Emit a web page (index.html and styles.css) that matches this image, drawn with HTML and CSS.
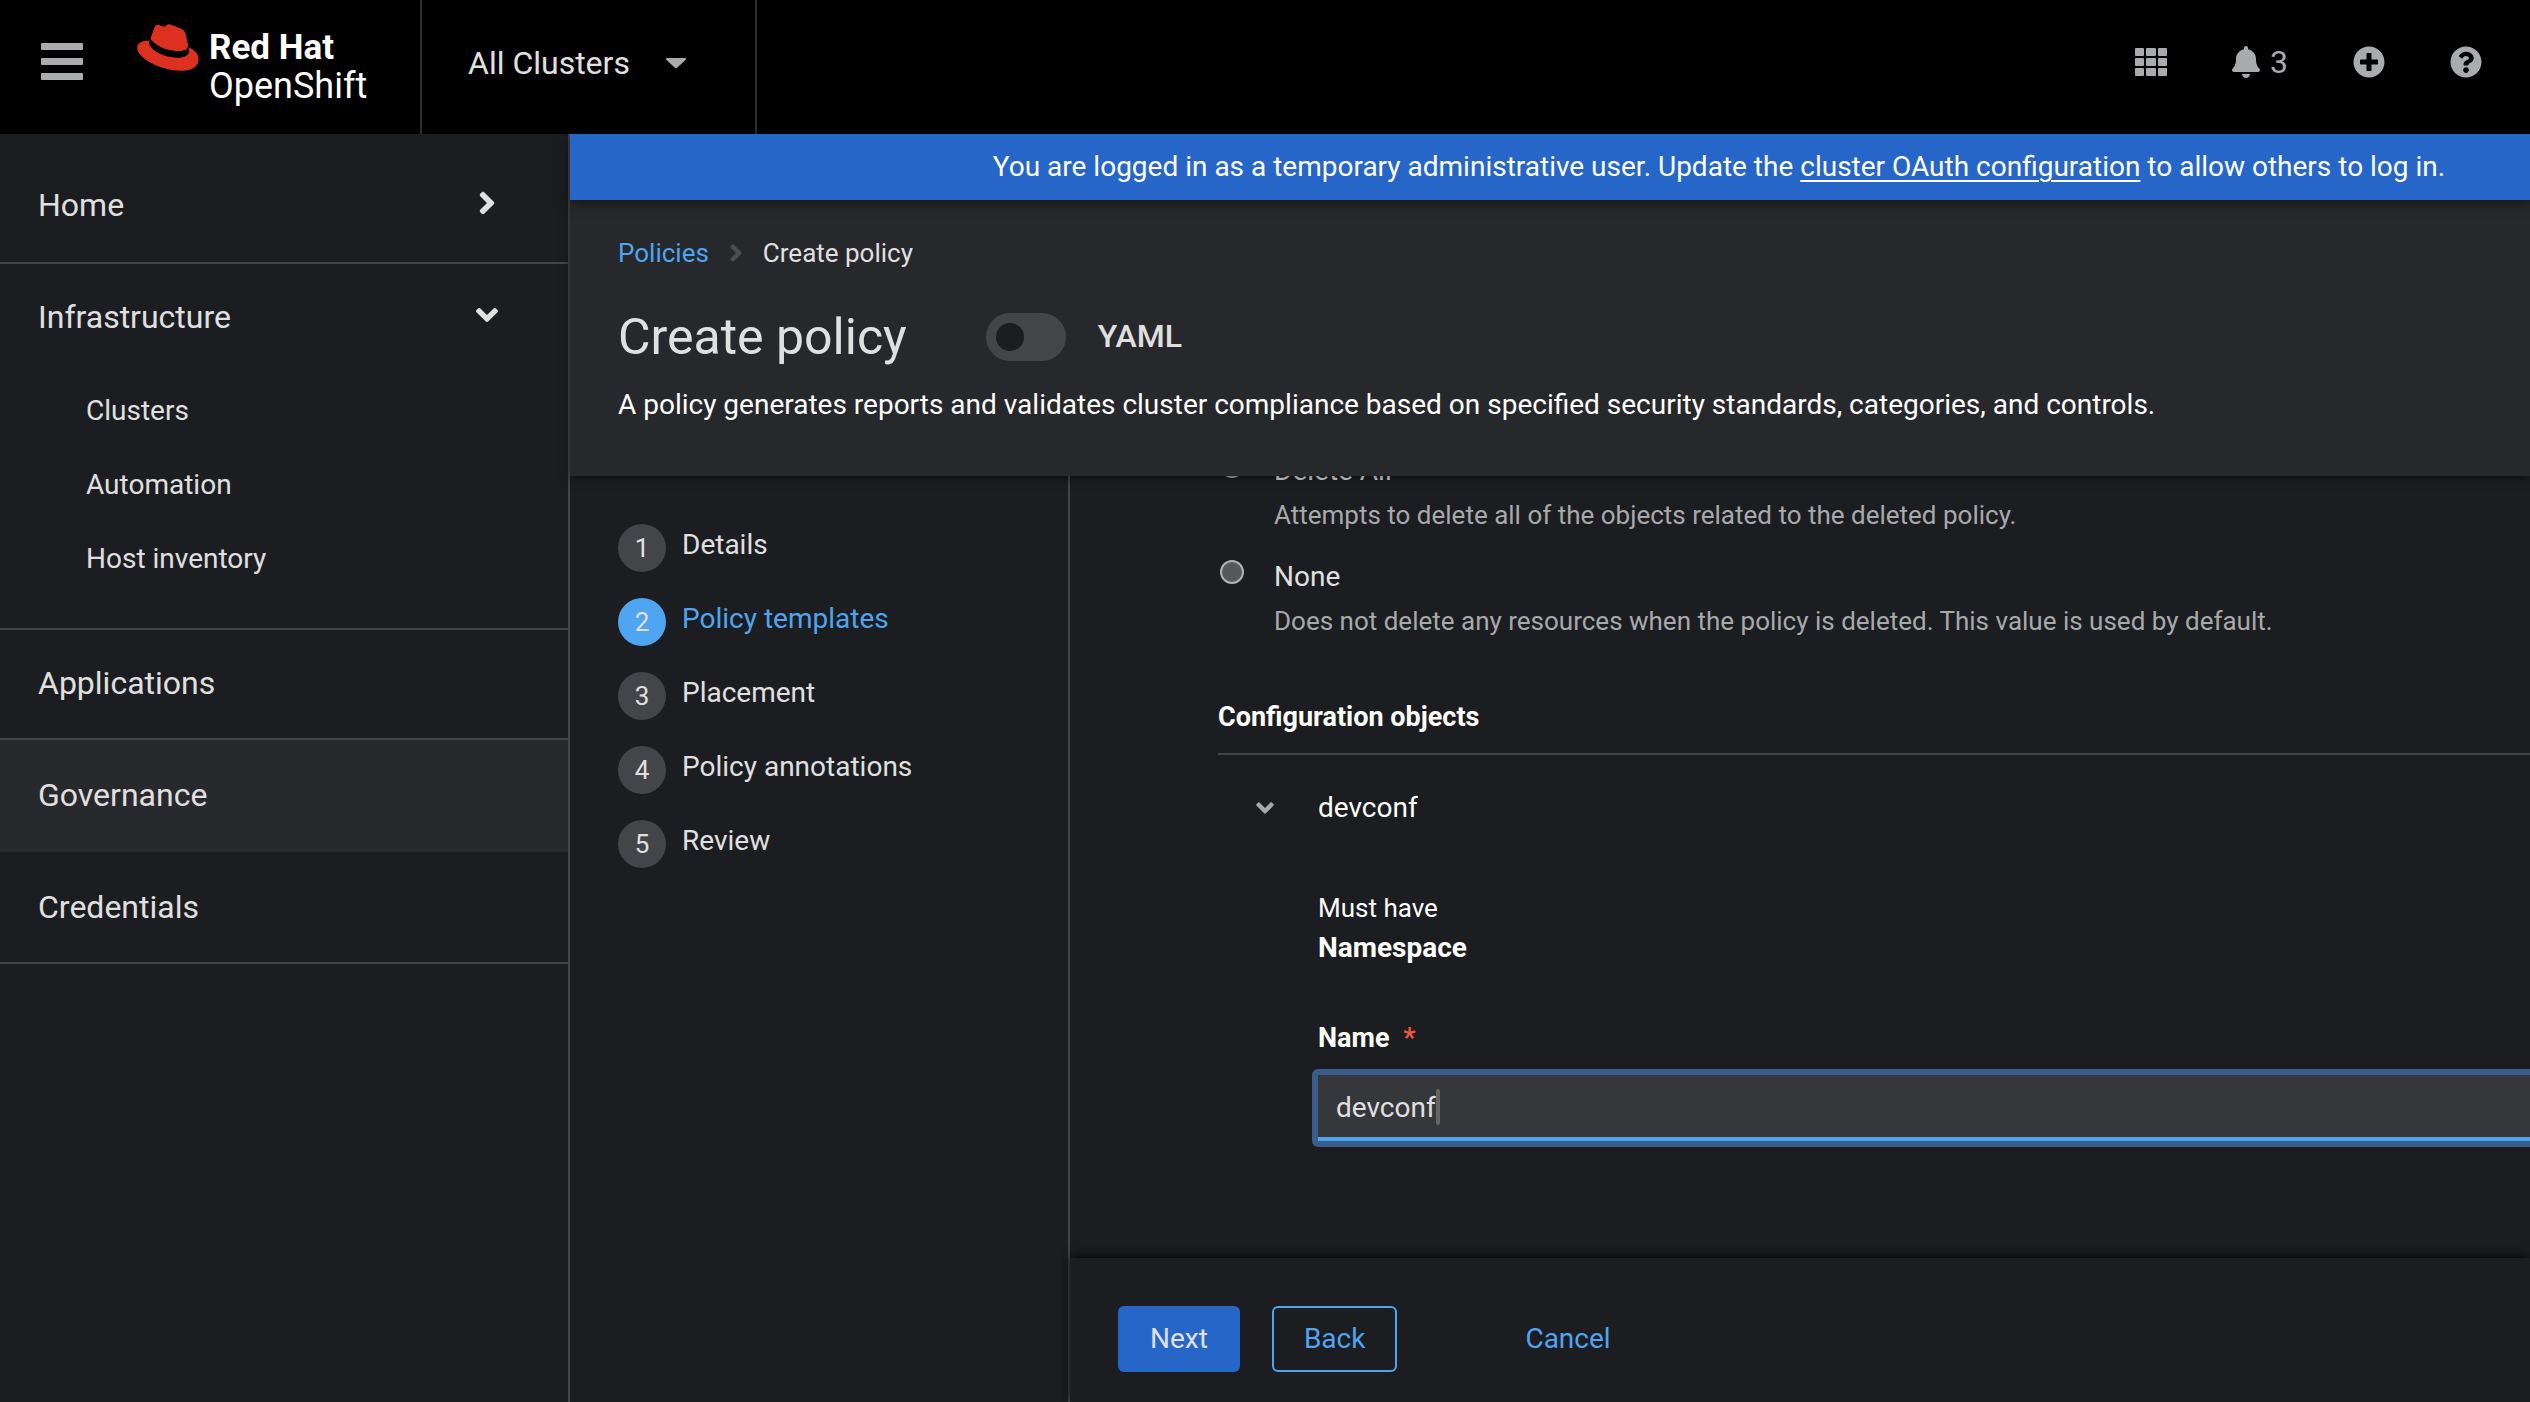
FILE: index.html
```html
<!DOCTYPE html>
<html lang="en">
<head>
<meta charset="utf-8">
<title>Create policy</title>
<link rel="stylesheet" href="styles.css">
</head>
<body>
<svg class="sprite" aria-hidden="true">
  <symbol id="angle-right" viewBox="0 0 256 512"><path d="M224.3 273l-136 136c-9.4 9.4-24.6 9.4-33.9 0l-22.6-22.6c-9.4-9.4-9.4-24.6 0-33.9l96.4-96.4-96.4-96.4c-9.4-9.4-9.4-24.6 0-33.9L54.3 103c9.4-9.4 24.6-9.4 33.9 0l136 136c9.5 9.4 9.5 24.6.1 34z"/></symbol>
  <symbol id="angle-down" viewBox="0 0 320 512"><path d="M143 352.3L7 216.3c-9.4-9.4-9.4-24.6 0-33.9l22.6-22.6c9.4-9.4 24.6-9.4 33.9 0l96.4 96.4 96.4-96.4c9.4-9.4 24.6-9.4 33.9 0l22.6 22.6c9.4 9.4 9.4 24.6 0 33.9l-136 136c-9.2 9.4-24.4 9.4-33.8 0z"/></symbol>
</svg>

<header class="masthead">
  <div class="brand">
    <button class="icon-button" type="button" aria-label="Global navigation">
      <svg width="42" height="37" viewBox="0 0 42 37"><rect width="42" height="7" rx="1"/><rect y="15" width="42" height="7" rx="1"/><rect y="30" width="42" height="7" rx="1"/></svg>
    </button>
    <a class="logo" href="#">
      <svg class="hat" width="62" height="47" viewBox="0 0 192 145"><path d="M127.47,83.49c12.51,0,30.61-2.58,30.61-17.46a14,14,0,0,0-.31-3.42l-7.45-32.36c-1.72-7.12-3.23-10.35-15.73-16.6C124.89,8.69,103.76.5,97.51.5,91.69.5,90,8,83.06,8c-6.68,0-11.64-5.6-17.89-5.6-6,0-9.91,4.09-12.93,12.5,0,0-8.41,23.72-9.49,27.16A6.43,6.43,0,0,0,42.53,44c0,9.22,36.3,39.45,84.94,39.45M160,72.07c1.73,8.19,1.73,9.05,1.73,10.13,0,14-15.74,21.77-36.43,21.77C78.54,104,37.58,76.6,37.58,58.49a18.45,18.45,0,0,1,1.51-7.33C22.27,52,.5,55,.5,74.22c0,31.48,74.59,70.28,133.65,70.28,45.28,0,56.7-20.48,56.7-36.65,0-12.72-11-27.16-30.83-35.78"/></svg>
      <span class="wordmark"><strong>Red Hat</strong><span>OpenShift</span></span>
    </a>
  </div>
  <button class="cluster-switcher" type="button">All Clusters
    <svg width="20" height="10" viewBox="0 0 20 10"><path d="M1 0h18a1 1 0 0 1 .7 1.700l-8.300 7.700a2 2 0 0 1-2.800 0L.3 1.700A1 1 0 0 1 1 0z"/></svg>
  </button>
  <div class="tools">
    <button class="icon-button" type="button" aria-label="Applications">
      <svg width="32" height="28" viewBox="0 0 32 28"><g><rect width="9" height="8" rx="1"/><rect x="11" width="10" height="8" rx="1"/><rect x="23" width="9" height="8" rx="1"/><rect y="10" width="9" height="8" rx="1"/><rect x="11" y="10" width="10" height="8" rx="1"/><rect x="23" y="10" width="9" height="8" rx="1"/><rect y="20" width="9" height="8" rx="1"/><rect x="11" y="20" width="10" height="8" rx="1"/><rect x="23" y="20" width="9" height="8" rx="1"/></g></svg>
    </button>
    <button class="icon-button notifications" type="button" aria-label="3 notifications">
      <svg width="28" height="32" viewBox="0 0 448 512"><path d="M224 512c35.320 0 63.970-28.650 63.970-64H160.030c0 35.350 28.650 64 63.970 64zm215.390-149.710c-19.320-20.760-55.470-51.990-55.470-154.290 0-77.700-54.480-139.900-127.940-155.160V32c0-17.670-14.320-32-31.980-32s-31.980 14.330-31.980 32v20.840C118.560 68.100 64.080 130.300 64.080 208c0 102.300-36.150 133.530-55.470 154.290-6 6.450-8.660 14.160-8.610 21.710.11 16.400 12.980 32 32.100 32h383.800c19.120 0 32-15.600 32.100-32 .05-7.550-2.610-15.270-8.610-21.710z"/></svg>
      <span>3</span>
    </button>
    <button class="icon-button" type="button" aria-label="Import">
      <svg width="32" height="32" viewBox="0 0 512 512"><path d="M256 8C119 8 8 119 8 256s111 248 248 248 248-111 248-248S393 8 256 8zm144 276c0 6.600-5.400 12-12 12h-92v92c0 6.600-5.400 12-12 12h-56c-6.600 0-12-5.400-12-12v-92h-92c-6.600 0-12-5.400-12-12v-56c0-6.600 5.400-12 12-12h92v-92c0-6.600 5.400-12 12-12h56c6.600 0 12 5.400 12 12v92h92c6.600 0 12 5.400 12 12v56z"/></svg>
    </button>
    <button class="icon-button" type="button" aria-label="Help">
      <svg width="32" height="32" viewBox="0 0 512 512"><path d="M504 256c0 136.997-111.043 248-248 248S8 392.997 8 256C8 119.083 119.043 8 256 8s248 111.083 248 248zM262.655 90c-54.497 0-89.255 22.957-116.549 63.758-3.536 5.286-2.353 12.415 2.715 16.258l34.699 26.310c5.205 3.947 12.621 3.008 16.665-2.122 17.864-22.658 30.113-35.797 57.303-35.797 20.429 0 45.698 13.148 45.698 32.958 0 14.976-12.363 22.667-32.534 33.976C247.128 238.528 216 254.941 216 296v4c0 6.627 5.373 12 12 12h56c6.627 0 12-5.373 12-12v-1.333c0-28.462 83.186-29.647 83.186-106.667 0-58.002-60.165-102-116.531-102zM256 338c-25.365 0-46 20.635-46 46 0 25.364 20.635 46 46 46s46-20.636 46-46c0-25.365-20.635-46-46-46z"/></svg>
    </button>
  </div>
</header>

<div class="shell">
  <nav class="sidebar" aria-label="Main">
    <ul class="nav-list">
      <li class="nav-item"><a class="nav-link" href="#">Home<svg class="nav-arrow" width="22" height="36"><use href="#angle-right"/></svg></a></li>
      <li class="nav-item ruled">
        <a class="nav-link" href="#">Infrastructure<svg class="nav-arrow" width="22" height="36"><use href="#angle-down"/></svg></a>
        <ul class="subnav">
          <li><a href="#">Clusters</a></li>
          <li><a href="#">Automation</a></li>
          <li><a href="#">Host inventory</a></li>
        </ul>
      </li>
      <li class="nav-item ruled"><a class="nav-link" href="#">Applications</a></li>
      <li class="nav-item ruled current"><a class="nav-link" href="#" aria-current="page">Governance</a></li>
      <li class="nav-item plain"><a class="nav-link" href="#">Credentials</a></li>
    </ul>
  </nav>

  <main class="page">
    <p class="banner">You are logged in as a temporary administrative user. Update the <a href="#">cluster OAuth configuration</a> to allow others to log in.</p>

    <section class="page-header">
      <nav class="breadcrumb" aria-label="Breadcrumb">
        <a href="#">Policies</a>
        <svg width="14" height="28"><use href="#angle-right"/></svg>
        <span>Create policy</span>
      </nav>
      <div class="title-row">
        <h1>Create policy</h1>
        <label class="switch"><input type="checkbox" role="switch"><span>YAML</span></label>
      </div>
      <p class="description">A policy generates reports and validates cluster compliance based on specified security standards, categories, and controls.</p>
    </section>

    <div class="wizard">
      <nav class="wizard-nav" aria-label="Steps">
        <ol>
          <li><a href="#"><span class="step">1</span>Details</a></li>
          <li><a class="active" href="#" aria-current="step"><span class="step">2</span>Policy templates</a></li>
          <li><a href="#"><span class="step">3</span>Placement</a></li>
          <li><a href="#"><span class="step">4</span>Policy annotations</a></li>
          <li><a href="#"><span class="step">5</span>Review</a></li>
        </ol>
      </nav>

      <form class="wizard-main">
        <div class="wizard-body">
          <div class="scrolled">
            <div class="radio">
              <input type="radio" name="prune" id="prune-all">
              <div><label for="prune-all">Delete All</label><p>Attempts to delete all of the objects related to the deleted policy.</p></div>
            </div>
            <div class="radio">
              <input type="radio" name="prune" id="prune-none">
              <div><label for="prune-none">None</label><p>Does not delete any resources when the policy is deleted. This value is used by default.</p></div>
            </div>
            <h2>Configuration objects</h2>
            <div class="object">
              <button class="expander" type="button" aria-label="Collapse devconf" aria-expanded="true"><svg width="18" height="28"><use href="#angle-down"/></svg></button>
              <div class="object-fields">
                <p class="object-name">devconf</p>
                <p class="must">Must have</p>
                <p class="kind">Namespace</p>
                <label class="field-label" for="ns-name">Name <span class="required">*</span></label>
                <div class="field">
                  <input type="text" id="ns-name" value="devconf">
                  <span class="caret"></span>
                </div>
              </div>
            </div>
          </div>
        </div>
        <footer class="wizard-footer">
          <button class="btn primary" type="button">Next</button>
          <button class="btn secondary" type="button">Back</button>
          <button class="btn link" type="button">Cancel</button>
        </footer>
      </form>
    </div>
  </main>
</div>
</body>
</html>
```
FILE: styles.css
```css
:root {
  --bg: #1c1d20;
  --bg-raised: #27282b;
  --line: #444548;
  --text: #e0e0e0;
  --muted: #a8a9ab;
  --link: #4fa5f0;
  --blue: #2666c8;
}

* { box-sizing: border-box; }

body {
  margin: 0;
  height: 100vh;
  display: flex;
  flex-direction: column;
  overflow: hidden;
  background: var(--bg);
  color: var(--text);
  font: 28px/42px Roboto, "Liberation Sans", sans-serif;
}

p, h1, h2, ul, ol { margin: 0; padding: 0; }
ul, ol { list-style: none; }
a { color: inherit; text-decoration: none; }
button, input { font: inherit; color: inherit; margin: 0; }
svg { display: block; fill: currentColor; flex: none; }
.sprite { position: absolute; width: 0; height: 0; }

/* Masthead */
.masthead {
  display: flex;
  flex: none;
  min-height: 134px;
  background: #000;
}
.brand {
  display: flex;
  align-items: flex-start;
  gap: 54px;
  width: 422px;
  padding: 24px 0 0 41px;
  border-right: 2px solid #2b2c2e;
}
.icon-button {
  display: flex;
  align-items: center;
  padding: 0;
  border: 0;
  background: none;
  color: #aaabac;
}
.brand .icon-button { padding-top: 19px; }
.logo { display: flex; gap: 10px; color: #fff; }
.hat { fill: #dc3020; }
.wordmark {
  display: flex;
  flex-direction: column;
  padding-top: 5px;
  font-size: 36px;
  line-height: 38px;
}
.wordmark strong { font-size: 35px; }
.cluster-switcher {
  display: flex;
  align-items: center;
  gap: 36px;
  padding: 0 69px 8px 46px;
  border: 0;
  border-right: 2px solid #2b2c2e;
  background: none;
  font-size: 32px;
}
.cluster-switcher svg { color: #aaabac; }
.tools {
  display: flex;
  align-items: center;
  margin-left: auto;
  padding: 0 48px 10px 0;
  gap: 65px;
}
.notifications { gap: 10px; font-size: 32px; }

/* Layout */
.shell { display: flex; flex: 1; min-height: 0; }
.page { display: flex; flex-direction: column; flex: 1; min-width: 0; }

/* Sidebar */
.sidebar {
  flex: none;
  width: 570px;
  border-right: 2px solid var(--line);
  padding-top: 18px;
}
.nav-list { border-bottom: 2px solid var(--line); font-size: 32px; }
.nav-link {
  display: flex;
  align-items: center;
  justify-content: space-between;
  height: 110px;
  padding: 0 70px 4px 38px;
}
.nav-arrow { margin-bottom: 4px; }
.ruled { border-top: 2px solid var(--line); }
.plain .nav-link { padding-bottom: 0; }
.current {
  margin-top: -2px;
  padding-top: 2px;
  background: #28292c;
}
.subnav { padding: 0 0 32px 86px; font-size: 28px; }
.subnav a { display: block; line-height: 74px; }

/* Banner and page header */
.banner {
  position: relative;
  z-index: 2;
  padding: 12px 0 12px 338px;
  text-align: center;
  white-space: nowrap;
  background: var(--blue);
  color: #fff;
  box-shadow: 0 2px 12px rgba(0, 0, 0, .6);
}
.banner a {
  text-decoration: underline;
  text-decoration-thickness: 2px;
  text-underline-offset: 4px;
}
.page-header {
  position: relative;
  z-index: 1;
  padding: 34px 48px 50px;
  background: var(--bg-raised);
  box-shadow: 0 2px 10px rgba(0, 0, 0, .5);
}
.breadcrumb {
  display: flex;
  align-items: center;
  gap: 20px;
  font-size: 26px;
  line-height: 38px;
}
.breadcrumb a { color: var(--link); }
.breadcrumb svg { color: #4c4d50; }
.title-row {
  display: flex;
  align-items: center;
  gap: 79px;
  padding: 35px 0 17px;
}
h1 { font-size: 50px; font-weight: 400; line-height: 60px; }
.switch {
  display: flex;
  align-items: center;
  gap: 32px;
  font-size: 32px;
  font-weight: 500;
}
.switch span { padding-bottom: 2px; }
.switch input {
  appearance: none;
  display: flex;
  align-items: center;
  width: 80px;
  height: 48px;
  padding: 0 10px;
  border-radius: 24px;
  background: var(--line);
}
.switch input::before {
  content: "";
  width: 28px;
  height: 28px;
  border-radius: 50%;
  background: var(--bg);
}
.description { color: #fff; }

/* Wizard */
.wizard { display: flex; flex: 1; min-height: 0; }
.wizard-nav {
  flex: none;
  width: 500px;
  padding: 48px 48px 0;
  border-right: 2px solid var(--line);
}
.wizard-nav ol { display: flex; flex-direction: column; gap: 26px; }
.wizard-nav a {
  display: flex;
  align-items: flex-start;
  gap: 16px;
  height: 48px;
}
.wizard-nav .active { color: var(--link); }
.step {
  width: 48px;
  border-radius: 50%;
  background: var(--line);
  color: var(--text);
  font-size: 26px;
  line-height: 48px;
  text-align: center;
}
.active .step { background: var(--link); }
.wizard-main { display: flex; flex-direction: column; flex: 1; min-width: 0; }
.wizard-body { flex: 1; min-height: 0; overflow: hidden; }
.scrolled { margin-top: -26px; padding-left: 148px; }
.radio { display: flex; gap: 30px; margin-bottom: 21px; padding-left: 2px; }
.radio input {
  appearance: none;
  flex: none;
  width: 24px;
  height: 24px;
  margin-top: 4px;
  border: 2px solid #b0b1b3;
  border-radius: 50%;
  background: #57585b;
}
.radio label { display: block; }
.radio p {
  margin-top: 4px;
  color: var(--muted);
  font-size: 26px;
  line-height: 39px;
}
h2 {
  margin-top: 56px;
  padding-bottom: 16px;
  border-bottom: 2px solid var(--line);
  color: #fff;
  font-size: 27px;
  font-weight: 700;
  line-height: 40px;
}
.object {
  display: flex;
  align-items: flex-start;
  gap: 44px;
  padding: 32px 0 0 38px;
  color: #fff;
}
.expander {
  padding: 7px 0;
  border: 0;
  background: none;
  color: var(--muted);
}
.object-fields { flex: 1; min-width: 0; }
.must { margin-top: 60px; font-size: 26px; line-height: 38px; }
.kind { font-weight: 700; }
.field-label {
  display: block;
  margin-top: 49px;
  font-size: 27px;
  font-weight: 700;
  line-height: 40px;
}
.required { margin-left: 7px; color: #f0563d; }
.field {
  position: relative;
  margin: 11px -8px 0 -6px;
  padding: 6px;
  border-radius: 6px;
  background: #3b5d8c;
}
.field input {
  display: block;
  width: 100%;
  height: 66px;
  padding: 2px 18px 0;
  border: 0;
  border-bottom: 4px solid var(--link);
  border-radius: 0;
  outline: 0;
  background: #36373a;
  color: var(--text);
}
.caret {
  position: absolute;
  left: 124px;
  top: 20px;
  width: 4px;
  height: 36px;
  border-radius: 2px;
  background: #646567;
}
.wizard-footer {
  position: relative;
  display: flex;
  align-items: center;
  flex: none;
  gap: 32px;
  padding: 48px 48px 30px;
  background: var(--bg);
  box-shadow: 0 -2px 10px rgba(0, 0, 0, .8);
}
.btn {
  height: 66px;
  padding: 0 30px;
  border: 2px solid transparent;
  border-radius: 6px;
  background: none;
}
.primary { background: var(--blue); }
.secondary { border-color: var(--link); color: var(--link); }
.link { margin-left: 64px; color: var(--link); }
```
